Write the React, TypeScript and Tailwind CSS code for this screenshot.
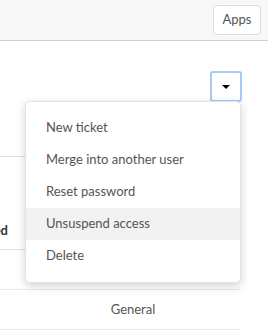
import { useState } from "react";

const actions = [
  "New ticket",
  "Merge into another user",
  "Reset password",
  "Unsuspend access",
  "Delete",
];

export default function App() {
  const [active] = useState(3);

  return (
    <div className="relative h-[336px] w-[268px] overflow-hidden bg-white font-['Lato',sans-serif] text-[13px] text-[#555]">
      <header className="flex h-[41px] items-center justify-end border-b border-[#d0d0d0] bg-[#f8f8f8] pr-[7px]">
        <button className="h-[30px] w-[48px] rounded-[4px] border border-[#dedede] bg-white text-[13px] text-[#555]">
          Apps
        </button>
      </header>

      <div className="w-[240px]">
        <div className="flex h-[61px] items-end justify-end">
          <button className="relative -mr-[2px] flex h-[31px] w-[32px] items-center justify-center rounded-[3px] border-2 border-[#a8c8fa] bg-white">
            <span className="h-0 w-0 border-x-[4px] border-t-[4px] border-x-transparent border-t-black" />
          </button>
        </div>
        <div className="h-[55px] border-b border-[#e2e2e2]" />
        <div className="flex h-[93px] items-end border-b border-[#e2e2e2] pb-[9px]">
          <div className="flex w-[8px] justify-end overflow-hidden whitespace-nowrap font-bold text-[#333]">
            Suspended
          </div>
        </div>
        <div className="h-[40px] border-b border-[#e8e8e8]" />
        <div className="flex h-[40px] items-center justify-center border-b border-[#e8e8e8] pl-[26px]">
          General
        </div>
      </div>

      <ul className="absolute left-[25px] top-[101px] w-[216px] rounded-[5px] border border-[#e4e4e4] bg-white py-[10px] shadow-[0_3px_10px_rgba(0,0,0,0.18)]">
        {actions.map((label, i) => (
          <li
            key={label}
            className={`flex h-[32px] items-center pl-[20px] ${i === active ? "bg-[#f2f2f2]" : ""}`}
          >
            {label}
          </li>
        ))}
      </ul>
    </div>
  );
}
